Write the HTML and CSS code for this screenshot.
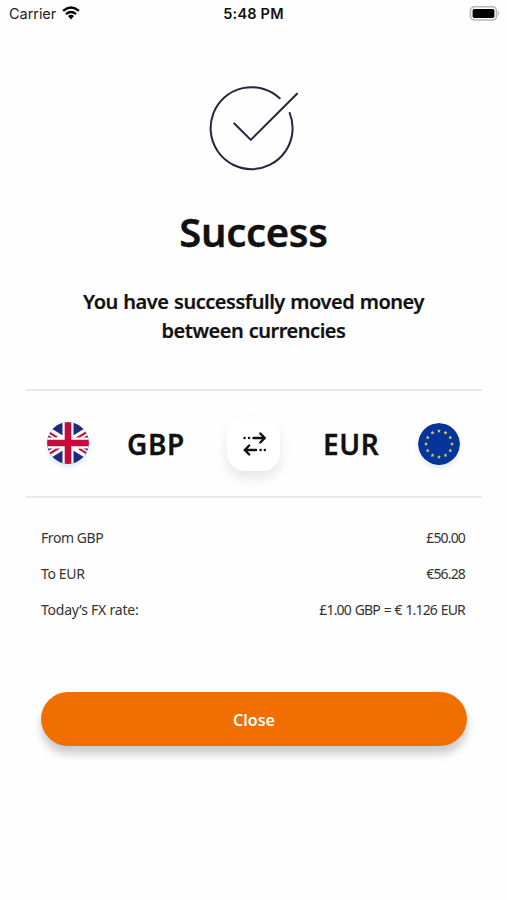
FILE: index.html
```html
<!DOCTYPE html>
<html lang="en">
<head>
<meta charset="utf-8">
<title>Success</title>
<link rel="stylesheet" href="styles.css">
</head>
<body>
<div class="screen">
  <header class="status">
    <div class="carrier"><span>Carrier</span>
      <svg class="wifi" width="18" height="14" viewBox="0 0 20 15" fill="none" stroke="#000" stroke-width="2.7"><path d="M1.2 5.2Q10-2.2 18.8 5.2M4.4 8.7Q10 4 15.6 8.7"/><path d="M6.6 10.8Q10 8.1 13.4 10.8L10 14.6Z" fill="#000" stroke="none"/></svg>
    </div>
    <div class="time">5:48 PM</div>
    <div class="battery">
      <svg width="31" height="15" viewBox="0 0 31 15"><rect x="1.5" y=".8" width="26" height="13.2" rx="4" fill="#fff" stroke="#b5b5b5" stroke-width="1.6"/><rect x="3.6" y="2.9" width="21.8" height="9" rx="1.6"/><path d="M29 5.2Q31 7.4 29 9.6Z" fill="#aaa"/></svg>
    </div>
  </header>
  <main>
    <svg class="tick" width="92" height="88" viewBox="0 0 92 88" fill="none" stroke="#25253f" stroke-width="2" stroke-linecap="round" stroke-linejoin="round"><path d="M71.7 15.3A41 41 0 1 0 81.7 30M26.3 40.5l16.5 16.4L89 10.8"/></svg>
    <h1>Success</h1>
    <p class="message">You have successfully moved money<br>between currencies</p>
    <section class="pair">
      <svg class="flag uk" width="42" height="42" viewBox="0 0 42 42">
        <clipPath id="disc"><circle cx="21" cy="21" r="21"/></clipPath>
        <g clip-path="url(#disc)">
          <path fill="#1c2a80" d="M0 0h42v42H0z"/>
          <path stroke="#fff" stroke-width="7.4" d="M-9 2.4l60 37.2M-9 39.6L51 2.4"/>
          <path stroke="#c8103c" stroke-width="2.2" d="M0 9.2L10 15.4M42 32.8L32 26.6M0 33.2l13-8M42 8.8l-13 8"/>
          <path stroke="#fff" stroke-width="11" d="M21 0v42M0 21h42"/>
          <path stroke="#c60b3a" stroke-width="6.6" d="M21 0v42M0 21h42"/>
        </g>
      </svg>
      <span class="code gbp">GBP</span>
      <div class="swap">
        <svg width="24" height="24" viewBox="0 0 24 24" fill="none" stroke="#111" stroke-width="2.4" stroke-linecap="round" stroke-linejoin="round"><path d="M11.5 6H22M18.3 1.5L22.8 6l-4.5 4.5M14 18H3.5M7.2 13.5L2.7 18l4.5 4.5"/><path d="M2.5 6h.1M7 6h.1M18.6 18h.1M22.8 18h.1"/></svg>
      </div>
      <span class="code eur">EUR</span>
      <svg class="flag" width="42" height="42" viewBox="0 0 42 42">
        <circle cx="21" cy="21" r="21" fill="#05349b"/>
        <defs><path id="star" fill="#e0c850" d="M0-2.1L.6-.7 2-.6.9.3 1.3 1.8 0 1-1.3 1.8-.9.3-2-.6-.6-.7Z"/></defs>
        <use href="#star" x="21" y="8"/><use href="#star" x="27.5" y="9.7"/><use href="#star" x="32.3" y="14.5"/><use href="#star" x="34" y="21"/><use href="#star" x="32.3" y="27.5"/><use href="#star" x="27.5" y="32.3"/><use href="#star" x="21" y="34"/><use href="#star" x="14.5" y="32.3"/><use href="#star" x="9.7" y="27.5"/><use href="#star" x="8" y="21"/><use href="#star" x="9.7" y="14.5"/><use href="#star" x="14.5" y="9.7"/>
      </svg>
    </section>
    <dl class="details">
      <div><dt class="from">From GBP</dt><dd class="amount">£50.00</dd></div>
      <div><dt class="to">To EUR</dt><dd class="amount">€56.28</dd></div>
      <div><dt class="today">Today’s FX rate:</dt><dd class="rate">£1.00 GBP = € 1.126 EUR</dd></div>
    </dl>
    <button class="close" type="button">Close</button>
  </main>
</div>
</body>
</html>
```
FILE: styles.css
```css
* { box-sizing: border-box; }
body { margin: 0; background: #fefefe; color: #111; font-family: "Noto Sans", sans-serif; }
.screen { width: 507px; height: 900px; overflow: hidden; }
.status { display: grid; grid-template-columns: 1fr auto 1fr; align-items: center; height: 28px; padding: 0 7px 0 9px; font: 14.5px/28px Inter, sans-serif; }
.carrier { display: flex; align-items: center; gap: 6px; color: #222; }
.carrier span { letter-spacing: -.05px; }
.wifi { margin-top: -2px; }
.time { margin-left: -2px; font-weight: 600; letter-spacing: .2px; }
.battery { display: flex; justify-content: flex-end; margin-top: -2px; }
main { display: flex; flex-direction: column; }
.tick { margin: 55px 0 0 208px; }
h1 { margin: 33px 0 0; height: 56px; text-align: center; font-size: 40px; line-height: 56px; font-weight: 600; letter-spacing: -.3px; -webkit-text-stroke: .4px #111; }
.message { margin: 27px 0 0; text-align: center; font-size: 20px; line-height: 29px; font-weight: 600; letter-spacing: -.48px; word-spacing: .8px; white-space: nowrap; -webkit-text-stroke: .2px #111; }
.pair { display: flex; align-items: center; height: 109px; margin: 44px 25px 0 26px; padding: 0 22px 0 21px; border: solid #e9e9e9; border-width: 2px 0; }
.flag { flex: none; border-radius: 50%; box-shadow: 0 3px 4px #9cc6da55; }
.uk { margin-top: -2px; }
.code { font-size: 28px; line-height: 40px; font-weight: 600; letter-spacing: .6px; white-space: nowrap; -webkit-text-stroke: .3px #111; }
.gbp { width: 57px; margin-left: 38px; }
.eur { width: 56px; margin: 0 39px 0 43px; }
.swap { flex: none; display: grid; place-items: center; width: 53px; height: 54px; margin-left: 43px; border-radius: 18px; background: #fff; box-shadow: 0 7px 12px #00000018; }
.details { margin: 22px 41px 0; font-size: 14px; color: #333; }
.details div { display: flex; justify-content: space-between; height: 36px; line-height: 36px; white-space: nowrap; }
.details dd { margin: 0; padding-right: 1px; }
.from { letter-spacing: -.43px; }
.to { letter-spacing: -.35px; }
.today { letter-spacing: -.22px; }
.amount { letter-spacing: -.85px; }
.rate { letter-spacing: -.83px; word-spacing: .9px; }
.close { width: 426px; height: 54px; margin: 64px 0 0 41px; padding: 2px 0 0; border: 0; border-radius: 27px; background: #f16e00; color: #fff; font: 600 16px/52px "Noto Sans", sans-serif; box-shadow: 0 8px 9px #0003; }
```
